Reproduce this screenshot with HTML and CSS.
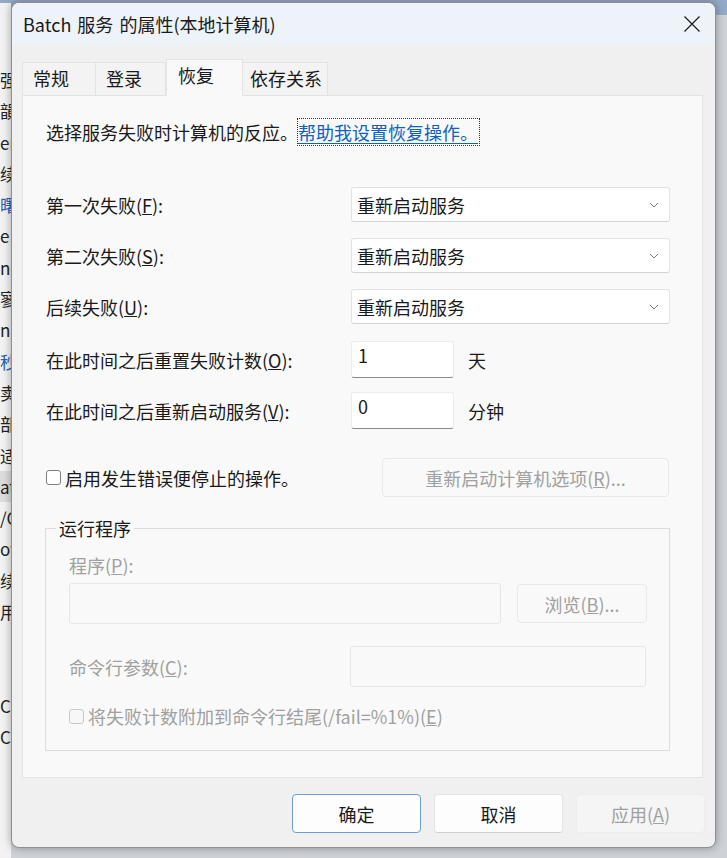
FILE: index.html
```html
<!DOCTYPE html>
<html lang="zh-CN">
<head>
<meta charset="utf-8">
<title>Batch 服务 的属性(本地计算机)</title>
<link rel="stylesheet" href="styles.css">
</head>
<body>
<div class="desk">
  <div class="backwin">
    <div class="bl">强</div>
    <div class="bl">韻</div>
    <div class="bl">er</div>
    <div class="bl">续</div>
    <div class="bl blue">曙</div>
    <div class="bl">e</div>
    <div class="bl">ne</div>
    <div class="bl">寥</div>
    <div class="bl">na</div>
    <div class="bl blue">秒</div>
    <div class="bl">卖</div>
    <div class="bl">部</div>
    <div class="bl">适</div>
    <div class="bl hl">at</div>
    <div class="bl">/C</div>
    <div class="bl">ov</div>
    <div class="bl">续</div>
    <div class="bl">用</div>
    <div class="bl">&nbsp;</div>
    <div class="bl">&nbsp;</div>
    <div class="bl">C</div>
    <div class="bl">C</div>
  </div>

  <div class="dialog">
    <div class="titlebar">
      <span class="title">Batch 服务 的属性(本地计算机)</span>
      <svg class="close" width="16" height="16" viewBox="0 0 16 16"><path d="M0.5 0.5 L15.5 15.5 M15.5 0.5 L0.5 15.5" stroke="#1b1b1b" stroke-width="1.2" fill="none"/></svg>
    </div>

    <div class="tabs">
      <div class="tab t1">常规</div>
      <div class="tab t2">登录</div>
      <div class="tab sel">恢复</div>
      <div class="tab t4">依存关系</div>
    </div>

    <div class="panel">
      <div class="intro">选择服务失败时计算机的反应。<a class="link">帮助我设置恢复操作。</a></div>

      <div class="row r1">
        <span class="lbl">第一次失败(<u>F</u>):</span>
        <div class="combo"><span>重新启动服务</span><svg class="chev" width="10" height="6" viewBox="0 0 10 6"><path d="M1 1 L5 5 L9 1" stroke="#7a7a7a" stroke-width="1" fill="none"/></svg></div>
      </div>
      <div class="row r2">
        <span class="lbl">第二次失败(<u>S</u>):</span>
        <div class="combo"><span>重新启动服务</span><svg class="chev" width="10" height="6" viewBox="0 0 10 6"><path d="M1 1 L5 5 L9 1" stroke="#7a7a7a" stroke-width="1" fill="none"/></svg></div>
      </div>
      <div class="row r3">
        <span class="lbl">后续失败(<u>U</u>):</span>
        <div class="combo"><span>重新启动服务</span><svg class="chev" width="10" height="6" viewBox="0 0 10 6"><path d="M1 1 L5 5 L9 1" stroke="#7a7a7a" stroke-width="1" fill="none"/></svg></div>
      </div>
      <div class="row r4">
        <span class="lbl">在此时间之后重置失败计数(<u>O</u>):</span>
        <div class="edit">1</div>
        <span class="unit">天</span>
      </div>
      <div class="row r5">
        <span class="lbl">在此时间之后重新启动服务(<u>V</u>):</span>
        <div class="edit">0</div>
        <span class="unit">分钟</span>
      </div>

      <div class="checkrow">
        <div class="chk"><span class="box"></span><span>启用发生错误便停止的操作。</span></div>
        <div class="btn dis restart">重新启动计算机选项(<u>R</u>)...</div>
      </div>

      <fieldset class="group">
        <legend>运行程序</legend>
        <div class="ginner">
          <div class="glabel">程序(<u>P</u>):</div>
          <div class="prow">
            <div class="dedit prog"></div>
            <div class="btn dis browse">浏览(<u>B</u>)...</div>
          </div>
          <div class="arow">
            <span class="alabel">命令行参数(<u>C</u>):</span>
            <div class="dedit args"></div>
          </div>
          <div class="chk dchk"><span class="box"></span><span>将失败计数附加到命令行结尾(/fail=%1%)(<u>E</u>)</span></div>
        </div>
      </fieldset>
    </div>

    <div class="footer">
      <div class="btn ok">确定</div>
      <div class="btn cancel">取消</div>
      <div class="btn dis apply">应用(<u>A</u>)</div>
    </div>
  </div>
</div>
</body>
</html>
```

FILE: styles.css
```css
* { box-sizing: border-box; }

body {
  margin: 0;
  width: 727px;
  height: 858px;
  overflow: hidden;
  background: linear-gradient(#93aac7 0, #93aac7 15px, #ced2d7 15px);
  font-family: "Noto Sans CJK SC", "Noto Sans", sans-serif;
  font-size: 18px;
  color: #1a1a1a;
}

.desk {
  display: flex;
  height: 858px;
}

.backwin {
  width: 11px;
  flex: none;
  margin-top: 3px;
  height: 855px;
  background: #f2f2f2;
  overflow: hidden;
  padding-top: 61px;
}

.bl {
  height: 31.3px;
  line-height: 31px;
  white-space: nowrap;
  font-size: 17px;
  color: #222;
  overflow: hidden;
}

.bl.hl { background: #dcdcdc; }
.bl.blue { color: #2a5fb0; }

.dialog {
  width: 705px;
  flex: none;
  margin-top: 2px;
  height: 846px;
  border: 1px solid #8f8f8f;
  border-radius: 8px;
  background: #f0f0f0;
  box-shadow: 0 0 9px rgba(0, 0, 0, 0.35);
  overflow: hidden;
  display: flex;
  flex-direction: column;
}

.titlebar {
  height: 42px;
  flex: none;
  background: #eef3f9;
  display: flex;
  align-items: center;
  justify-content: space-between;
  padding: 0 15px 0 11px;
}

.title {
  font-size: 18px;
  line-height: 24px;
  color: #1a1a1a;
  word-spacing: 2px;
}

.close { display: block; }

.tabs {
  display: flex;
  align-items: flex-end;
  height: 36px;
  margin-top: 14px;
  padding-left: 10px;
  position: relative;
  z-index: 2;
}

.tab {
  height: 33px;
  line-height: 31px;
  padding-left: 10px;
  background: #f3f3f3;
  border: 1px solid #e3e3e3;
  border-bottom: none;
  font-size: 18px;
  color: #1a1a1a;
}

.t1 { width: 74px; }
.t2 { width: 70px; border-left: none; }
.t4 { width: 85px; padding-left: 7px; border-left: none; }

.tab.sel {
  width: 77px;
  height: 37px;
  margin-bottom: -1px;
  background: #f9f9f9;
  line-height: 30px;
  padding-left: 11px;
  border-color: #e3e3e3;
}

.panel {
  width: 681px;
  height: 683px;
  flex: none;
  margin-left: 10px;
  border: 1px solid #e3e3e3;
  background: #f9f9f9;
  padding: 24px 0 0 23px;
  position: relative;
  z-index: 1;
}

.intro {
  height: 24px;
  line-height: 24px;
  white-space: nowrap;
}

.link {
  color: #0a62c4;
  text-decoration: underline;
  text-underline-offset: 3px;
  outline: 1px dotted #333;
  outline-offset: 0px;
  padding-right: 1px;
}

.row {
  display: flex;
  align-items: center;
}

.r1 { margin-top: 43px; }
.r2, .r3 { margin-top: 16px; }
.r4 { margin-top: 17px; }
.r5 { margin-top: 14px; }

.lbl {
  width: 305px;
  flex: none;
  line-height: 24px;
  white-space: nowrap;
}

.combo {
  width: 319px;
  height: 35px;
  background: #fff;
  border: 1px solid #e2e2e2;
  border-bottom-color: #d3d3d3;
  border-radius: 3px;
  display: flex;
  align-items: center;
  justify-content: space-between;
  padding: 0 10px 0 5px;
  line-height: 24px;
}

.chev { display: block; }

.edit {
  width: 103px;
  height: 37px;
  background: #fff;
  border: 1px solid #ececec;
  border-bottom: 1px solid #8a8a8a;
  border-radius: 3px;
  padding: 1px 0 0 6px;
  line-height: 24px;
}

.unit {
  margin-left: 14px;
  line-height: 24px;
}

.checkrow {
  margin-top: 29px;
  width: 623px;
  display: flex;
  align-items: center;
  justify-content: space-between;
}

.chk {
  display: flex;
  align-items: center;
  line-height: 24px;
  white-space: nowrap;
}

.box {
  width: 15px;
  height: 15px;
  border: 1px solid #7e7e7e;
  border-radius: 3px;
  background: #fff;
  margin-right: 4px;
  flex: none;
}

.btn {
  height: 39px;
  border-radius: 4px;
  display: flex;
  align-items: center;
  justify-content: center;
  line-height: 24px;
  background: #fdfdfd;
  border: 1px solid #e3e3e3;
  white-space: nowrap;
}

.btn.dis {
  background: #f9f9f9;
  border-color: #e8e8e8;
  color: #a0a0a0;
}

.restart { width: 287px; }

.group {
  margin: 19px 0 0 -1px;
  width: 625px;
  padding: 0;
  border: 1px solid #dcdcdc;
  min-width: 0;
}

.group legend {
  margin-left: 10px;
  padding: 0 3px;
  line-height: 24px;
  font-size: 18px;
  color: #1a1a1a;
}

.ginner {
  padding: 13px 0 22px 23px;
  color: #a0a0a0;
}

.glabel {
  line-height: 24px;
}

.prow {
  margin-top: 6px;
  display: flex;
  align-items: center;
}

.dedit {
  height: 41px;
  background: #f9f9f9;
  border: 1px solid #e6e6e6;
  border-radius: 3px;
}

.prog { width: 432px; }

.browse {
  width: 130px;
  margin-left: 16px;
}

.arow {
  margin-top: 22px;
  display: flex;
  align-items: center;
}

.alabel {
  width: 281px;
  flex: none;
  line-height: 24px;
}

.args { width: 296px; }

.dchk {
  margin-top: 17px;
}

.dchk .box {
  border-color: #c9c9c9;
  background: #f7f7f7;
  margin-right: 4px;
}

.footer {
  display: flex;
  justify-content: flex-end;
  gap: 13px;
  margin-top: 16px;
  padding-right: 10px;
}

.footer .btn { width: 129px; }

.btn.ok {
  border-color: #6c9fd6;
  background: #fdfdfd;
}

.btn.cancel {
  border-color: #e5e5e5;
  border-bottom-color: #d0d0d0;
}

.btn.apply {
  background: #f5f5f5;
  border-color: #ededed;
}
```
